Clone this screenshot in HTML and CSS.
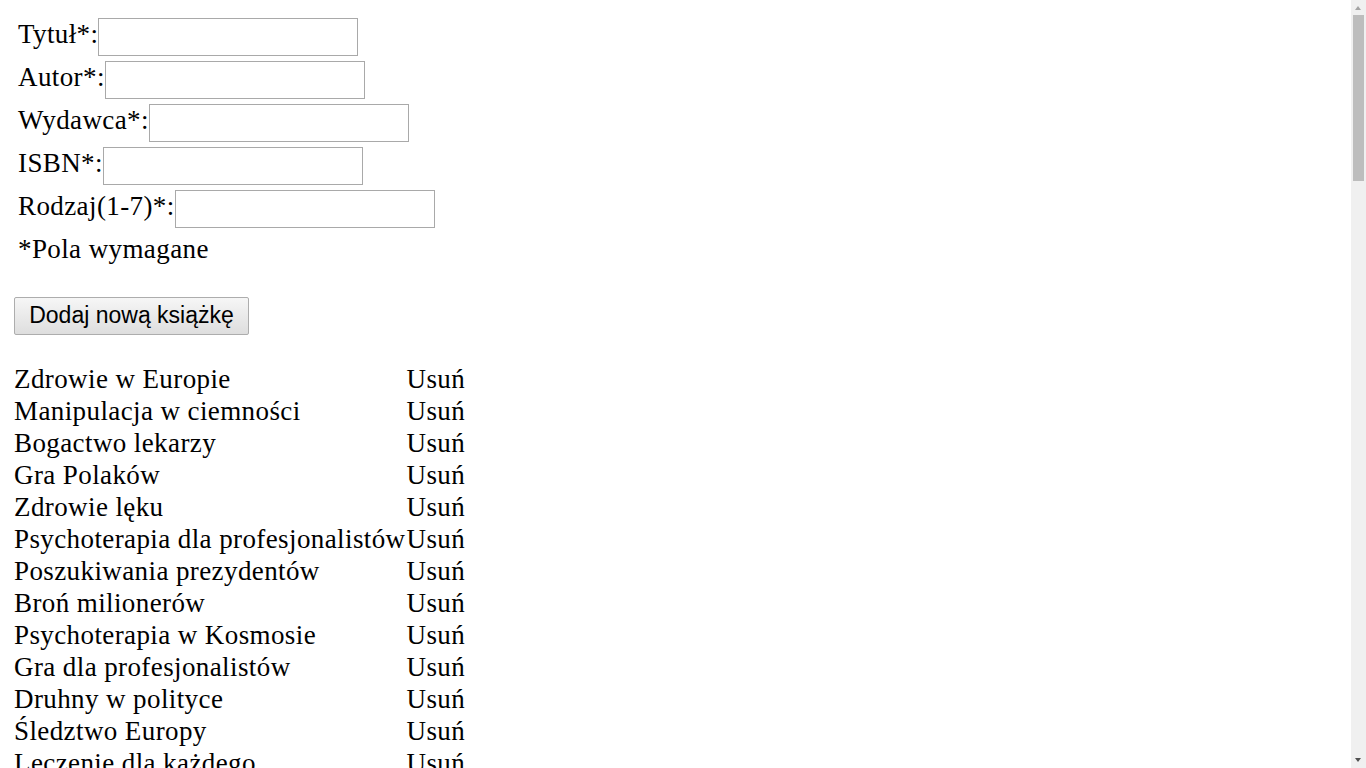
FILE: index.html
```html
<!DOCTYPE html>
<html lang="pl">
<head>
<meta charset="utf-8">
<title>Książki</title>
<link rel="stylesheet" href="styles.css">
</head>
<body>
<form class="book-form">
  <div class="field"><label class="label">Tytuł*:</label><input class="input" type="text"></div>
  <div class="field"><label class="label">Autor*:</label><input class="input" type="text"></div>
  <div class="field"><label class="label">Wydawca*:</label><input class="input" type="text"></div>
  <div class="field"><label class="label">ISBN*:</label><input class="input" type="text"></div>
  <div class="field"><label class="label">Rodzaj(1-7)*:</label><input class="input" type="text"></div>
  <div class="note">*Pola wymagane</div>
</form>
<div class="actions"><button class="btn" type="button">Dodaj nową książkę</button></div>
<table class="books">
<tbody>
<tr><td class="title">Zdrowie w Europie</td><td class="del">Usuń</td></tr>
<tr><td class="title">Manipulacja w ciemności</td><td class="del">Usuń</td></tr>
<tr><td class="title">Bogactwo lekarzy</td><td class="del">Usuń</td></tr>
<tr><td class="title">Gra Polaków</td><td class="del">Usuń</td></tr>
<tr><td class="title">Zdrowie lęku</td><td class="del">Usuń</td></tr>
<tr><td class="title">Psychoterapia dla profesjonalistów</td><td class="del">Usuń</td></tr>
<tr><td class="title">Poszukiwania prezydentów</td><td class="del">Usuń</td></tr>
<tr><td class="title">Broń milionerów</td><td class="del">Usuń</td></tr>
<tr><td class="title">Psychoterapia w Kosmosie</td><td class="del">Usuń</td></tr>
<tr><td class="title">Gra dla profesjonalistów</td><td class="del">Usuń</td></tr>
<tr><td class="title">Druhny w polityce</td><td class="del">Usuń</td></tr>
<tr><td class="title">Śledztwo Europy</td><td class="del">Usuń</td></tr>
<tr><td class="title">Leczenie dla każdego</td><td class="del">Usuń</td></tr>
<tr><td class="title">Tajemnica lekarzy</td><td class="del">Usuń</td></tr>
<tr><td class="title">Miłość w Europie</td><td class="del">Usuń</td></tr>
<tr><td class="title">Sekrety milionerów</td><td class="del">Usuń</td></tr>
<tr><td class="title">Historia Polaków</td><td class="del">Usuń</td></tr>
<tr><td class="title">Kuchnia w Kosmosie</td><td class="del">Usuń</td></tr>
<tr><td class="title">Strach w ciemności</td><td class="del">Usuń</td></tr>
<tr><td class="title">Władza prezydentów</td><td class="del">Usuń</td></tr>
<tr><td class="title">Pieniądze dla każdego</td><td class="del">Usuń</td></tr>
<tr><td class="title">Sztuka manipulacji</td><td class="del">Usuń</td></tr>
<tr><td class="title">Dieta dla profesjonalistów</td><td class="del">Usuń</td></tr>
<tr><td class="title">Magia w polityce</td><td class="del">Usuń</td></tr>
<tr><td class="title">Zagadka Europy</td><td class="del">Usuń</td></tr>
<tr><td class="title">Podróż w ciemności</td><td class="del">Usuń</td></tr>
<tr><td class="title">Bogactwo w Kosmosie</td><td class="del">Usuń</td></tr>
<tr><td class="title">Gra w polityce</td><td class="del">Usuń</td></tr>
<tr><td class="title">Zdrowie milionerów</td><td class="del">Usuń</td></tr>
<tr><td class="title">Broń w Europie</td><td class="del">Usuń</td></tr>
<tr><td class="title">Leczenie lęku</td><td class="del">Usuń</td></tr>
<tr><td class="title">Śledztwo prezydentów</td><td class="del">Usuń</td></tr>
<tr><td class="title">Druhny milionerów</td><td class="del">Usuń</td></tr>
<tr><td class="title">Manipulacja dla każdego</td><td class="del">Usuń</td></tr>
<tr><td class="title">Poszukiwania w Kosmosie</td><td class="del">Usuń</td></tr>
<tr><td class="title">Tajemnica Polaków</td><td class="del">Usuń</td></tr>
<tr><td class="title">Miłość w ciemności</td><td class="del">Usuń</td></tr>
<tr><td class="title">Sekrety lekarzy</td><td class="del">Usuń</td></tr>
<tr><td class="title">Historia Europy</td><td class="del">Usuń</td></tr>
<tr><td class="title">Kuchnia dla każdego</td><td class="del">Usuń</td></tr>
<tr><td class="title">Strach przed lekarzami</td><td class="del">Usuń</td></tr>
<tr><td class="title">Władza w Europie</td><td class="del">Usuń</td></tr>
<tr><td class="title">Pieniądze w polityce</td><td class="del">Usuń</td></tr>
<tr><td class="title">Sztuka w Kosmosie</td><td class="del">Usuń</td></tr>
<tr><td class="title">Dieta milionerów</td><td class="del">Usuń</td></tr>
<tr><td class="title">Magia Polaków</td><td class="del">Usuń</td></tr>
<tr><td class="title">Zagadka w ciemności</td><td class="del">Usuń</td></tr>
<tr><td class="title">Podróż dla profesjonalistów</td><td class="del">Usuń</td></tr>
<tr><td class="title">Psychoterapia lęku</td><td class="del">Usuń</td></tr>
<tr><td class="title">Gra milionerów</td><td class="del">Usuń</td></tr>
<tr><td class="title">Zdrowie prezydentów</td><td class="del">Usuń</td></tr>
<tr><td class="title">Broń dla każdego</td><td class="del">Usuń</td></tr>
<tr><td class="title">Leczenie w Europie</td><td class="del">Usuń</td></tr>
<tr><td class="title">Śledztwo w Kosmosie</td><td class="del">Usuń</td></tr>
<tr><td class="title">Druhny w ciemności</td><td class="del">Usuń</td></tr>
<tr><td class="title">Bogactwo Polaków</td><td class="del">Usuń</td></tr>
<tr><td class="title">Manipulacja lekarzy</td><td class="del">Usuń</td></tr>
<tr><td class="title">Poszukiwania Europy</td><td class="del">Usuń</td></tr>
<tr><td class="title">Tajemnica w polityce</td><td class="del">Usuń</td></tr>
<tr><td class="title">Miłość milionerów</td><td class="del">Usuń</td></tr>
<tr><td class="title">Sekrety w Kosmosie</td><td class="del">Usuń</td></tr>
<tr><td class="title">Historia lęku</td><td class="del">Usuń</td></tr>
<tr><td class="title">Kuchnia prezydentów</td><td class="del">Usuń</td></tr>
<tr><td class="title">Strach w Europie</td><td class="del">Usuń</td></tr>
<tr><td class="title">Władza dla każdego</td><td class="del">Usuń</td></tr>
<tr><td class="title">Pieniądze lekarzy</td><td class="del">Usuń</td></tr>
<tr><td class="title">Sztuka dla profesjonalistów</td><td class="del">Usuń</td></tr>
<tr><td class="title">Dieta w ciemności</td><td class="del">Usuń</td></tr>
<tr><td class="title">Magia w Europie</td><td class="del">Usuń</td></tr>
<tr><td class="title">Zagadka milionerów</td><td class="del">Usuń</td></tr>
<tr><td class="title">Podróż Polaków</td><td class="del">Usuń</td></tr>
<tr><td class="title">Psychoterapia prezydentów</td><td class="del">Usuń</td></tr>
<tr><td class="title">Gra w ciemności</td><td class="del">Usuń</td></tr>
<tr><td class="title">Zdrowie w polityce</td><td class="del">Usuń</td></tr>
<tr><td class="title">Broń w Kosmosie</td><td class="del">Usuń</td></tr>
<tr><td class="title">Leczenie milionerów</td><td class="del">Usuń</td></tr>
<tr><td class="title">Śledztwo lekarzy</td><td class="del">Usuń</td></tr>
<tr><td class="title">Druhny Europy</td><td class="del">Usuń</td></tr>
<tr><td class="title">Bogactwo w polityce</td><td class="del">Usuń</td></tr>
<tr><td class="title">Manipulacja Polaków</td><td class="del">Usuń</td></tr>
<tr><td class="title">Poszukiwania lęku</td><td class="del">Usuń</td></tr>
<tr><td class="title">Tajemnica w Kosmosie</td><td class="del">Usuń</td></tr>
<tr><td class="title">Miłość dla każdego</td><td class="del">Usuń</td></tr>
<tr><td class="title">Sekrety prezydentów</td><td class="del">Usuń</td></tr>
<tr><td class="title">Historia w ciemności</td><td class="del">Usuń</td></tr>
<tr><td class="title">Kuchnia w Europie</td><td class="del">Usuń</td></tr>
<tr><td class="title">Strach milionerów</td><td class="del">Usuń</td></tr>
<tr><td class="title">Władza lekarzy</td><td class="del">Usuń</td></tr>
<tr><td class="title">Pieniądze w Kosmosie</td><td class="del">Usuń</td></tr>
<tr><td class="title">Sztuka Polaków</td><td class="del">Usuń</td></tr>
<tr><td class="title">Dieta w polityce</td><td class="del">Usuń</td></tr>
<tr><td class="title">Magia dla profesjonalistów</td><td class="del">Usuń</td></tr>
<tr><td class="title">Zagadka lekarzy</td><td class="del">Usuń</td></tr>
<tr><td class="title">Podróż w polityce</td><td class="del">Usuń</td></tr>
<tr><td class="title">Leczenie w polityce</td><td class="del">Usuń</td></tr>
</tbody>
</table>
<div class="fake-scrollbar" aria-hidden="true">
  <div class="sb-up"></div>
  <div class="sb-track"><div class="sb-thumb"></div></div>
  <div class="sb-down"></div>
</div>
</body>
</html>
```

FILE: styles.css
```css
html {
  background: #fff;
}
body {
  margin: 0;
  padding: 18px 0 8px 0;
  font-family: "Liberation Serif", "Times New Roman", serif;
  font-size: 27px;
  letter-spacing: 0.4px;
  color: #000;
}
.book-form {
  margin: 0;
  padding: 0 0 0 18px;
  display: flex;
  flex-direction: column;
  gap: 5px;
}
.field {
  display: flex;
  align-items: flex-start;
  height: 38px;
}
.label {
  line-height: 32px;
}
.input {
  box-sizing: border-box;
  width: 260px;
  height: 38px;
  margin: 0;
  padding: 2px 3px;
  border: 1px solid #a9a9a9;
  border-radius: 0;
  background: #fff;
  font-family: "Liberation Sans", Arial, sans-serif;
  font-size: 20px;
  letter-spacing: 0;
  outline: none;
}
.note {
  line-height: 32px;
}
.actions {
  padding: 32px 0 0 14px;
}
.btn {
  box-sizing: border-box;
  height: 38px;
  width: 235px;
  margin: 0;
  padding: 0 0 2px 0;
  border: 1px solid #adadad;
  border-radius: 2px;
  background: linear-gradient(#f6f6f6, #dedede);
  font-family: "Liberation Sans", Arial, sans-serif;
  font-size: 23px;
  letter-spacing: 0;
  color: #000;
}
.books {
  margin: 28px 0 0 14px;
  border-collapse: collapse;
  border-spacing: 0;
}
.books td {
  padding: 0;
  line-height: 32px;
  white-space: nowrap;
}
.books td.del {
  padding-left: 1px;
}

/* window scrollbar as in the screenshot */
.fake-scrollbar {
  position: fixed;
  top: 0;
  right: 0;
  bottom: 0;
  width: 15px;
  background: #f0f0f0;
  display: flex;
  flex-direction: column;
}
.sb-up,
.sb-down {
  height: 15px;
  flex: 0 0 15px;
  position: relative;
}
.sb-up::after,
.sb-down::after {
  content: "";
  position: absolute;
  left: 4px;
  width: 0;
  height: 0;
  border-left: 3.5px solid transparent;
  border-right: 3.5px solid transparent;
}
.sb-up::after {
  top: 6px;
  border-bottom: 4px solid #a3a3a3;
}
.sb-down::after {
  top: 5px;
  border-top: 4px solid #505050;
}
.sb-track {
  flex: 1;
  padding: 0 2px;
}
.sb-thumb {
  height: 166px;
  background: #bdbdbd;
}
```
